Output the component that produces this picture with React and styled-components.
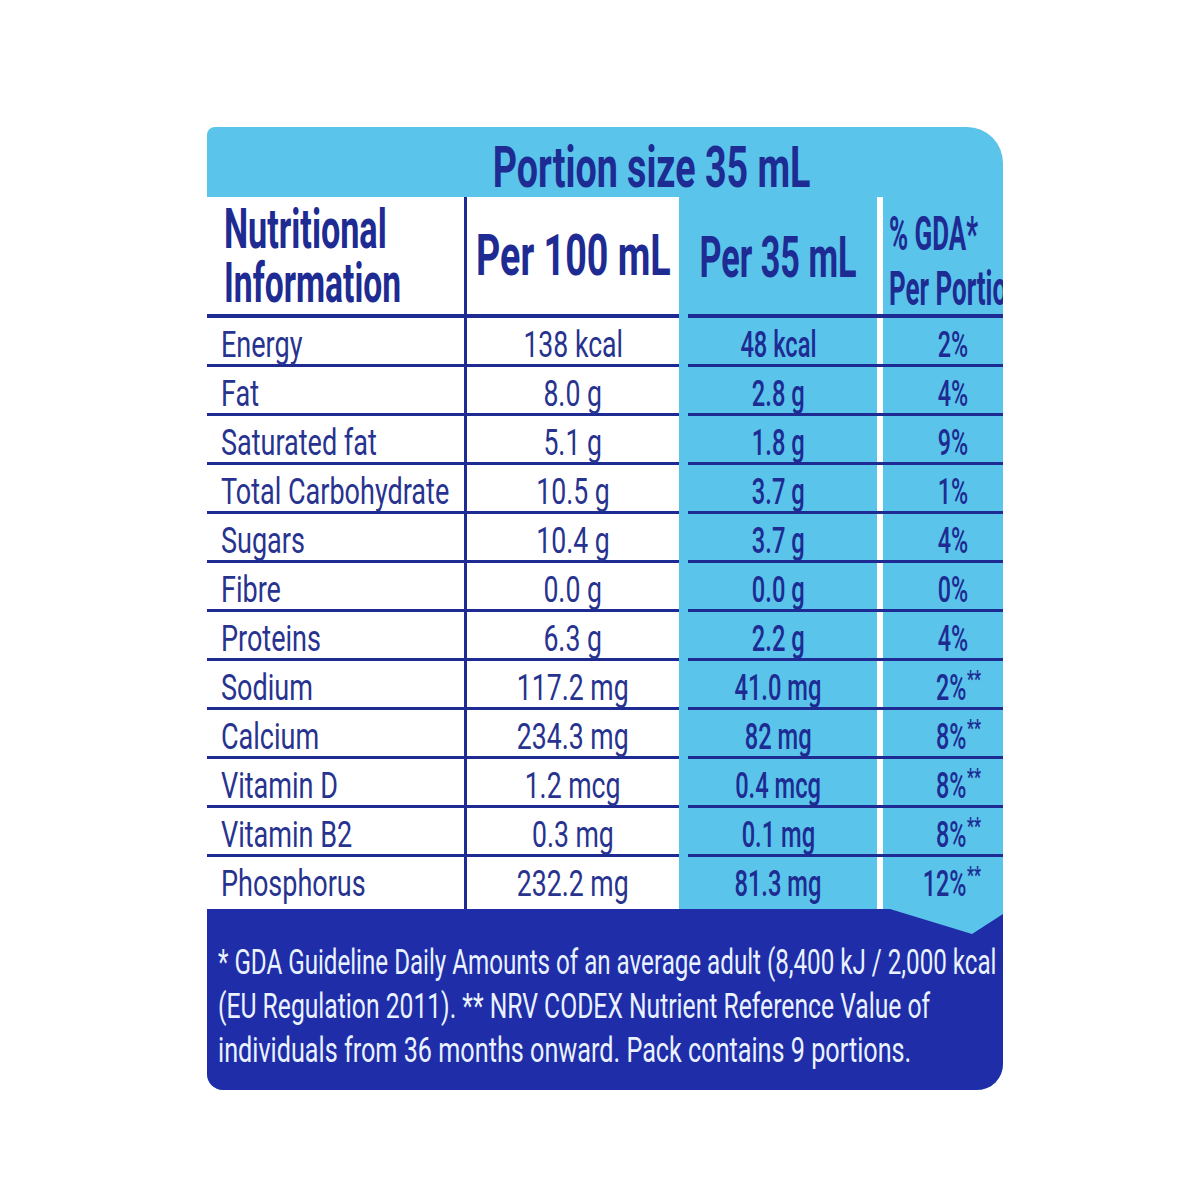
import React from 'react'
import styled, { createGlobalStyle } from 'styled-components'

const NAVY = '#1d2b92'
const INK = '#27338f'
const SKY = '#5ac4ea'
const FOOT = '#1f2ea8'

const GlobalStyle = createGlobalStyle`
    body {
        margin: 0;
        background: #ffffff;
        font-family: Roboto, "Liberation Sans", sans-serif;
    }
`

const Page = styled.div`
    padding: 127px 0 0 207px;
`

const Label = styled.div`
    width: 796px;
    overflow: hidden;
    background: ${SKY};
    border-radius: 8px 36px 26px 16px;
    color: ${NAVY};
`

// condensed text: the printed face is much narrower than any installed font
const Cond = styled.span`
    display: inline-block;
    white-space: nowrap;
    transform: scaleX(${p => p.$sx || 0.72});
    transform-origin: ${p => p.$origin || 'center'};
`

const Title = styled.div`
    box-sizing: border-box;
    height: 70px;
    padding: 11px 0 0 94px;
    display: flex;
    justify-content: center;
    font-size: 57px;
    font-weight: 700;
    line-height: 59px;
`

const Row = styled.div`
    position: relative;
    display: grid;
    grid-template-columns: 260px 212px 198px 1fr;
    grid-template-rows: minmax(0, 1fr);
    box-sizing: border-box;
    height: ${p => (p.$head ? 121 : p.$last ? 52 : 49)}px;
    border-bottom: ${p => (p.$head ? 4 : p.$last ? 0 : 3)}px solid ${NAVY};
`

const NameCell = styled.div`
    min-width: 0;
    background: #ffffff;
    border-right: 3px solid ${NAVY};
    padding: 7px 0 0 14px;
    font-size: 37px;
    line-height: 39px;
    color: ${INK};
`

const ValueCell = styled.div`
    min-width: 0;
    display: flex;
    justify-content: center;
    align-items: flex-start;
    background: #ffffff;
    padding-top: 7px;
    font-size: 37px;
    line-height: 39px;
    color: ${INK};
`

const PortionCell = styled.div`
    position: relative;
    min-width: 0;
    display: flex;
    justify-content: center;
    align-items: flex-start;
    padding-top: 7px;
    font-size: 37px;
    font-weight: 500;
    line-height: 39px;

    &::after {
        content: '';
        position: absolute;
        left: 0;
        bottom: -4px;
        width: 9px;
        height: 4px;
        background: ${SKY};
    }
`

const GdaCell = styled.div`
    min-width: 0;
    display: flex;
    justify-content: flex-end;
    align-items: flex-start;
    border-left: 6px solid #ffffff;
    padding: 7px 35px 0 0;
    font-size: 37px;
    font-weight: 500;
    line-height: 39px;
`

const Stars = styled.span`
    font-size: 0.66em;
    font-weight: 700;
    vertical-align: 0.55em;
    line-height: 0;
    margin: 0 -20px 0 1px;
`

const HeadName = styled(NameCell)`
    padding: 5px 0 0 17px;
    font-size: 56px;
    font-weight: 700;
    line-height: 54px;
    color: ${NAVY};
`

const HeadValue = styled(ValueCell)`
    padding-top: 29px;
    font-size: 57px;
    font-weight: 700;
    line-height: 60px;
    color: ${NAVY};
`

const HeadPortion = styled(PortionCell)`
    padding-top: 31px;
    font-size: 57px;
    font-weight: 700;
    line-height: 60px;
`

const HeadGda = styled.div`
    min-width: 0;
    border-left: 6px solid #ffffff;
    padding: 9px 0 0 6px;
    font-size: 48px;
    font-weight: 700;
    line-height: 55px;
`

const Footer = styled.div`
    position: relative;
    box-sizing: border-box;
    height: 181px;
    padding: 32px 0 0 11px;
    background: ${FOOT};
    color: #eaf2ff;
    font-size: 35px;
    line-height: 44px;
`

const FootLine = styled.div`
    width: max-content;
    white-space: nowrap;
    transform: scaleX(${p => p.$sx});
    transform-origin: left;
`

const Wedge = styled.svg`
    position: absolute;
    top: 0;
    right: 0;
`

const rows = [
    ['Energy', '138 kcal', '48 kcal', '2%'],
    ['Fat', '8.0 g', '2.8 g', '4%'],
    ['Saturated fat', '5.1 g', '1.8 g', '9%'],
    ['Total Carbohydrate', '10.5 g', '3.7 g', '1%'],
    ['Sugars', '10.4 g', '3.7 g', '4%'],
    ['Fibre', '0.0 g', '0.0 g', '0%'],
    ['Proteins', '6.3 g', '2.2 g', '4%'],
    ['Sodium', '117.2 mg', '41.0 mg', '2%', true],
    ['Calcium', '234.3 mg', '82 mg', '8%', true],
    ['Vitamin D', '1.2 mcg', '0.4 mcg', '8%', true],
    ['Vitamin B2', '0.3 mg', '0.1 mg', '8%', true],
    ['Phosphorus', '232.2 mg', '81.3 mg', '12%', true],
]

const App = () => {
    return (
        <>
            <GlobalStyle />
            <Page>
                <Label>
                    <Title><Cond $sx={0.66}>Portion size 35 mL</Cond></Title>

                    <Row $head>
                        <HeadName>
                            <Cond $sx={0.61} $origin='left'>Nutritional</Cond><br />
                            <Cond $sx={0.6} $origin='left'>Information</Cond>
                        </HeadName>
                        <HeadValue><Cond $sx={0.66}>Per 100 mL</Cond></HeadValue>
                        <HeadPortion><Cond $sx={0.6}>Per 35 mL</Cond></HeadPortion>
                        <HeadGda>
                            <Cond $sx={0.54} $origin='left'>% GDA*</Cond><br />
                            <Cond $sx={0.54} $origin='left'>Per Portion</Cond>
                        </HeadGda>
                    </Row>

                    {rows.map((item, index) => (
                        <Row key={item[0]} $last={index === rows.length - 1}>
                            <NameCell><Cond $sx={0.73} $origin='left'>{item[0]}</Cond></NameCell>
                            <ValueCell><Cond $sx={0.72}>{item[1]}</Cond></ValueCell>
                            <PortionCell><Cond $sx={0.64}>{item[2]}</Cond></PortionCell>
                            <GdaCell>
                                <Cond $sx={0.63} $origin='right'>{item[3]}{item[4] && <Stars>**</Stars>}</Cond>
                            </GdaCell>
                        </Row>
                    ))}

                    <Footer>
                        <Wedge width="113" height="26" viewBox="0 0 113 26">
                            <polygon points="0,0 82,25 113,5 113,0" fill={SKY} />
                        </Wedge>
                        <FootLine $sx={0.69}>* GDA Guideline Daily Amounts of an average adult (8,400 kJ / 2,000 kcal</FootLine>
                        <FootLine $sx={0.705}>(EU Regulation 2011). ** NRV CODEX Nutrient Reference Value of</FootLine>
                        <FootLine $sx={0.72}>individuals from 36 months onward. Pack contains 9 portions.</FootLine>
                    </Footer>
                </Label>
            </Page>
        </>
    )
}

export default App
